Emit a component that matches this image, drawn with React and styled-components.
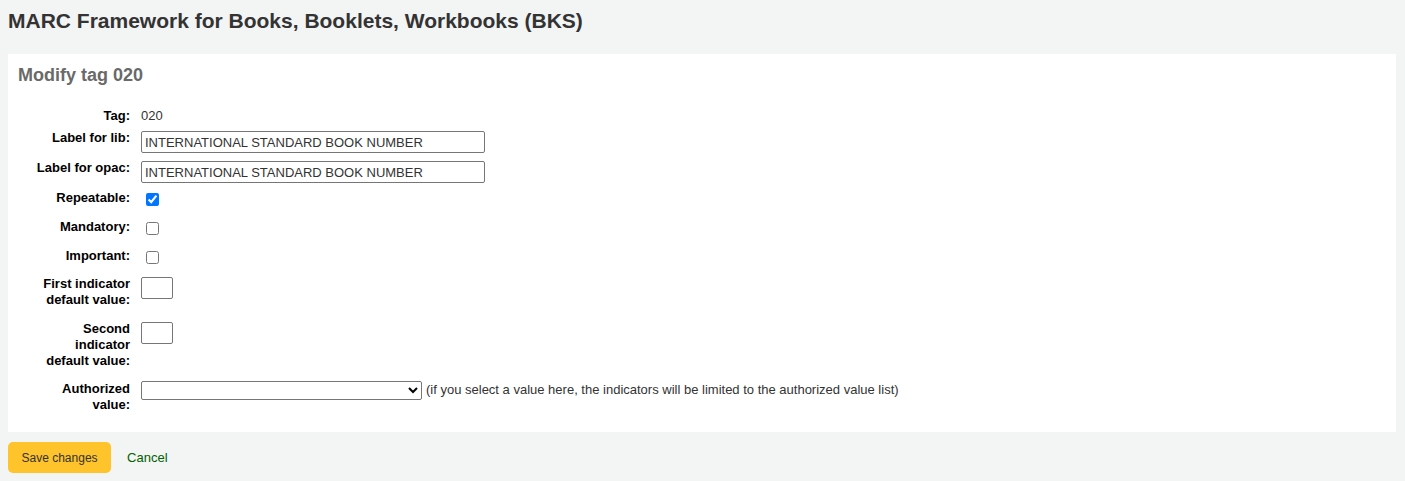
import React from 'react';
import styled, { createGlobalStyle } from 'styled-components';

const GlobalStyle = createGlobalStyle`
  body {
    margin: 0;
    background: #f3f4f4;
    font-family: "Liberation Sans", Arial, sans-serif;
    font-size: 13px;
    color: #333;
  }
`;

const labelText = 'INTERNATIONAL STANDARD BOOK NUMBER';

export default function App() {
  return (
    <Page>
      <GlobalStyle />
      <Title>MARC Framework for Books, Booklets, Workbooks (BKS)</Title>
      <Panel>
        <PanelHeading>Modify tag 020</PanelHeading>
        <Rows>
          <Row $pad={6}>
            <Label>Tag:</Label>
            <Value>020</Value>
          </Row>
          <Row>
            <Label>Label for lib:</Label>
            <TextInput defaultValue={labelText} />
          </Row>
          <Row>
            <Label>Label for opac:</Label>
            <TextInput defaultValue={labelText} />
          </Row>
          <Row>
            <Label>Repeatable:</Label>
            <Check type="checkbox" defaultChecked />
          </Row>
          <Row>
            <Label>Mandatory:</Label>
            <Check type="checkbox" />
          </Row>
          <Row $pad={6}>
            <Label>Important:</Label>
            <Check type="checkbox" />
          </Row>
          <Row $pad={13}>
            <Label>First indicator default value:</Label>
            <TextInput $small />
          </Row>
          <Row $pad={12}>
            <Label>Second indicator default value:</Label>
            <TextInput $small />
          </Row>
          <Row $pad={0}>
            <Label>Authorized value:</Label>
            <Select>
              <option value=""></option>
            </Select>
            <Hint>(if you select a value here, the indicators will be limited to the authorized value list)</Hint>
          </Row>
        </Rows>
      </Panel>
      <Actions>
        <SaveButton>Save changes</SaveButton>
        <CancelLink href="#">Cancel</CancelLink>
      </Actions>
    </Page>
  );
}

const Page = styled.div`
  padding: 8px 9px 0 8px;
`;

const Title = styled.h1`
  margin: 0 0 21px;
  font-size: 21px;
  line-height: 25px;
  font-weight: bold;
  color: #333;
`;

const Panel = styled.section`
  background: #fff;
  padding: 10px 10px 19px;
`;

const PanelHeading = styled.h2`
  margin: 0 0 22px;
  font-size: 18px;
  line-height: 22px;
  font-weight: bold;
  color: #696969;
`;

const Rows = styled.div`
  display: flex;
  flex-direction: column;
  padding-left: 12px;
`;

const Row = styled.div`
  display: flex;
  align-items: flex-start;
  padding-bottom: ${(p) => (p.$pad ?? 7)}px;
`;

const Label = styled.label`
  width: 100px;
  flex: none;
  margin-right: 11px;
  text-align: right;
  font-weight: bold;
  line-height: 16px;
  color: #000;
`;

const Value = styled.span`
  line-height: 16px;
  color: #333;
`;

const TextInput = styled.input`
  box-sizing: border-box;
  width: ${(p) => (p.$small ? 32 : 344)}px;
  height: 22px;
  margin: 1px 0 0;
  padding: 0 3px;
  border: 1px solid #767676;
  border-radius: 2px;
  font: 13px "Liberation Sans", Arial, sans-serif;
  color: #333;
  background: #fff;
`;

const Check = styled.input`
  width: 13px;
  height: 13px;
  margin: 3px 0 6px 5px;
`;

const Select = styled.select`
  box-sizing: border-box;
  width: 281px;
  height: 19px;
  margin: 0;
  border: 1px solid #767676;
  border-radius: 2px;
  background: #fff;
  font: 13px "Liberation Sans", Arial, sans-serif;
`;

const Hint = styled.span`
  margin: 1px 0 0 4px;
  line-height: 16px;
  color: #333;
`;

const Actions = styled.div`
  display: flex;
  align-items: center;
  gap: 16px;
  margin-top: 10px;
`;

const SaveButton = styled.button`
  height: 31px;
  padding: 0 13.5px;
  border: none;
  border-radius: 5px;
  background: #ffc32b;
  color: #333;
  font: 12px "Liberation Sans", Arial, sans-serif;
  cursor: pointer;
`;

const CancelLink = styled.a`
  color: #006100;
  text-decoration: none;
  font-size: 13px;
`;
